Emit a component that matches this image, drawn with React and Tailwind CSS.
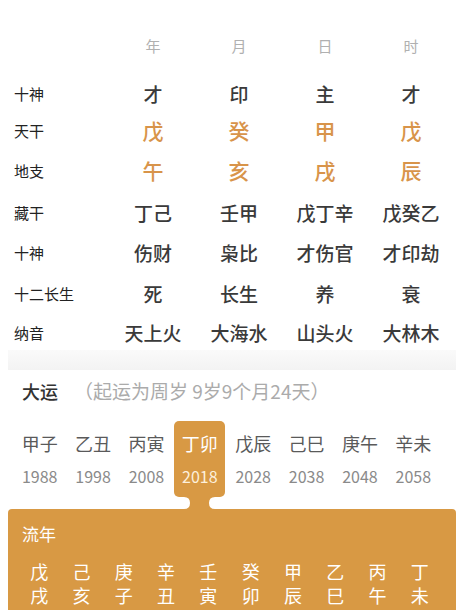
import React from 'react';

const PILLARS = ['年', '月', '日', '时'];

const ROWS = [
  { label: '十神', values: ['才', '印', '主', '才'], h: 'h-[36px]' },
  { label: '天干', values: ['戊', '癸', '甲', '戊'], h: 'h-[38px]', accent: true },
  { label: '地支', values: ['午', '亥', '戌', '辰'], h: 'h-[42px]', accent: true },
  { label: '藏干', values: ['丁己', '壬甲', '戊丁辛', '戊癸乙'], h: 'h-[42px]' },
  { label: '十神', values: ['伤财', '枭比', '才伤官', '才印劫'], h: 'h-[38px]' },
  { label: '十二长生', values: ['死', '长生', '养', '衰'], h: 'h-[44px]' },
  { label: '纳音', values: ['天上火', '大海水', '山头火', '大林木'], h: 'h-[34px]' },
];

const DAYUN = [
  ['甲子', 1988], ['乙丑', 1998], ['丙寅', 2008], ['丁卯', 2018],
  ['戊辰', 2028], ['己巳', 2038], ['庚午', 2048], ['辛未', 2058],
];
const CURRENT = 3;

const LIUNIAN = [
  ['戊', '戌'], ['己', '亥'], ['庚', '子'], ['辛', '丑'], ['壬', '寅'],
  ['癸', '卯'], ['甲', '辰'], ['乙', '巳'], ['丙', '午'], ['丁', '未'],
];

const FONT = { fontFamily: '"Noto Sans CJK SC", "Noto Sans", sans-serif' };

export default function App() {
  return (
    <div className="w-[464px] h-[610px] overflow-hidden bg-white" style={FONT}>
      {/* pillars table */}
      <div className="pt-[28px]">
        <div className="grid grid-cols-[110px_repeat(4,86px)] h-[36px] items-center">
          <div />
          {PILLARS.map((p) => (
            <div key={p} className="text-center text-[15px] text-[#b0b0b0]">{p}</div>
          ))}
        </div>
        <div className="mt-[12px]">
          {ROWS.map((row, i) => (
            <div key={i} className={`grid grid-cols-[110px_repeat(4,86px)] items-center ${row.h}`}>
              <div className="pl-[14px] text-[15px] text-[#222]">{row.label}</div>
              {row.values.map((v, j) => (
                <div
                  key={j}
                  className={row.accent ? 'text-center text-[21px] font-medium text-[#d8944a]' : 'text-center text-[19px] font-medium text-[#3a3a3a]'}
                >
                  {v}
                </div>
              ))}
            </div>
          ))}
        </div>
        <div className="mx-2 h-[20px] bg-gradient-to-b from-[#fafafa] to-[#f3f3f3]" />
      </div>

      {/* 大运 */}
      <div className="pt-[8px]">
        <div className="flex items-center h-[26px] pl-[22px]">
          <span className="text-[18px] font-medium text-[#333]">大运</span>
          <span className="ml-[16px] text-[19px] text-[#ababab]">（起运为周岁 9岁9个月24天）</span>
        </div>
        <div className="mt-[17px] ml-[13px] w-[427px] grid grid-cols-8">
          {DAYUN.map(([gz, year], i) => {
            const on = i === CURRENT;
            return (
              <div key={gz} className="flex justify-center">
                <div className={`relative w-[51px] flex flex-col items-center pt-[9px] pb-[10px] rounded-[5px] ${on ? 'bg-[#d89944]' : ''}`}>
                  <div className={`h-[26px] leading-[26px] text-[18px] ${on ? 'text-white' : 'text-[#5a5a5a]'}`}>{gz}</div>
                  <div className={`mt-[9px] h-[22px] leading-[22px] text-[16px] ${on ? 'text-[#fdf0dc]' : 'text-[#8a8a8a]'}`}>{year}</div>
                  {on && (
                    <svg className="absolute left-0 top-full" width="51" height="12" viewBox="0 0 51 12">
                      <path d="M10,0 H41 Q35,0 35,6 Q35,12 41,12 H10 Q16,12 16,6 Q16,0 10,0 Z" fill="#d89944" />
                    </svg>
                  )}
                </div>
              </div>
            );
          })}
        </div>
      </div>

      {/* 流年 */}
      <div className="mt-[12px] mx-2 rounded-t-[4px] bg-[#d89944] pt-[13px] pb-4">
        <div className="pl-[14px] h-[24px] leading-[24px] text-[17px] text-white">流年</div>
        <div className="mt-[13px] ml-[10px] w-[423px] grid grid-cols-10">
          {LIUNIAN.map(([g, z]) => (
            <div key={g + z} className="flex flex-col items-center text-[18px] text-white">
              <span className="h-[24px] leading-[24px]">{g}</span>
              <span className="h-[24px] leading-[24px]">{z}</span>
            </div>
          ))}
        </div>
      </div>
    </div>
  );
}
